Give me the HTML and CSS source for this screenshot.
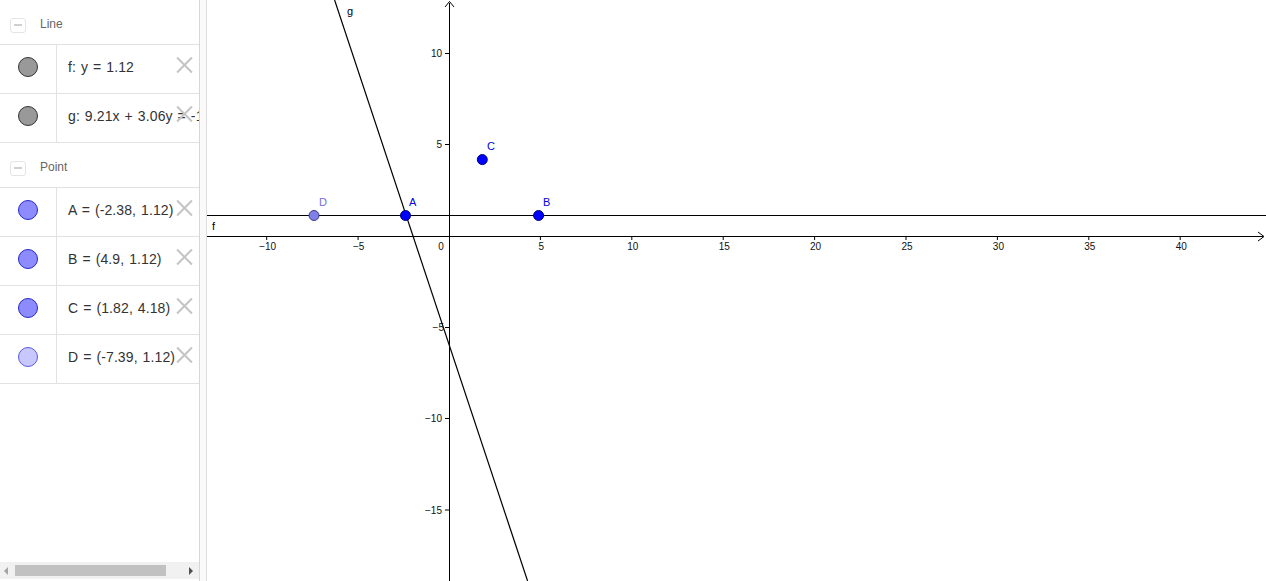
FILE: index.html
```html
<!DOCTYPE html>
<html>
<head>
<meta charset="utf-8">
<link rel="stylesheet" href="styles.css">
</head>
<body>
<div class="app">
  <aside class="panel">
    <div class="list">
      <div class="group">
        <span class="toggle"><span class="minus"></span></span>
        <span class="group-name">Line</span>
      </div>
      <div class="item">
        <div class="marble-col"><span class="marble gray"></span></div>
        <div class="text">f: y = 1.12</div>
        <span class="del"></span>
      </div>
      <div class="item">
        <div class="marble-col"><span class="marble gray"></span></div>
        <div class="text">g: 9.21x + 3.06y = -18.49</div>
        <span class="del"></span>
      </div>
      <div class="group">
        <span class="toggle"><span class="minus"></span></span>
        <span class="group-name">Point</span>
      </div>
      <div class="item">
        <div class="marble-col"><span class="marble blue"></span></div>
        <div class="text">A = (-2.38, 1.12)</div>
        <span class="del"></span>
      </div>
      <div class="item">
        <div class="marble-col"><span class="marble blue"></span></div>
        <div class="text">B = (4.9, 1.12)</div>
        <span class="del"></span>
      </div>
      <div class="item">
        <div class="marble-col"><span class="marble blue"></span></div>
        <div class="text">C = (1.82, 4.18)</div>
        <span class="del"></span>
      </div>
      <div class="item">
        <div class="marble-col"><span class="marble light"></span></div>
        <div class="text">D = (-7.39, 1.12)</div>
        <span class="del"></span>
      </div>
    </div>
    <div class="hscroll">
      <span class="arrow left"></span>
      <span class="thumb"></span>
      <span class="arrow right"></span>
    </div>
  </aside>
  <div class="splitter"></div>
  <main class="canvas">
    <svg class="graph" width="1059" height="581" viewBox="0 0 1059 581">
      <g class="axis">
        <line x1="0" y1="236.5" x2="1056" y2="236.5"/>
        <polyline class="arrowhead" points="1051,232 1057,236.5 1051,241"/>
        <line x1="242.5" y1="3" x2="242.5" y2="581"/>
        <polyline class="arrowhead" points="238,7 242.5,1.5 247,7"/>
        <line x1="59.7" y1="236" x2="59.7" y2="240"/>
        <line x1="151.1" y1="236" x2="151.1" y2="240"/>
        <line x1="333.4" y1="236" x2="333.4" y2="240"/>
        <line x1="424.8" y1="236" x2="424.8" y2="240"/>
        <line x1="516.2" y1="236" x2="516.2" y2="240"/>
        <line x1="607.6" y1="236" x2="607.6" y2="240"/>
        <line x1="699" y1="236" x2="699" y2="240"/>
        <line x1="790.4" y1="236" x2="790.4" y2="240"/>
        <line x1="881.8" y1="236" x2="881.8" y2="240"/>
        <line x1="973.2" y1="236" x2="973.2" y2="240"/>
        <line x1="238" y1="53.5" x2="242" y2="53.5"/>
        <line x1="238" y1="144.5" x2="242" y2="144.5"/>
        <line x1="238" y1="327.5" x2="242" y2="327.5"/>
        <line x1="238" y1="418.5" x2="242" y2="418.5"/>
        <line x1="238" y1="510" x2="242" y2="510"/>
      </g>
      <g class="ticklabels">
        <text x="60.7" y="250" text-anchor="middle">−10</text>
        <text x="151.6" y="250" text-anchor="middle">−5</text>
        <text x="234" y="250" text-anchor="middle">0</text>
        <text x="334.4" y="250" text-anchor="middle">5</text>
        <text x="425.8" y="250" text-anchor="middle">10</text>
        <text x="517.2" y="250" text-anchor="middle">15</text>
        <text x="608.6" y="250" text-anchor="middle">20</text>
        <text x="700" y="250" text-anchor="middle">25</text>
        <text x="791.4" y="250" text-anchor="middle">30</text>
        <text x="882.8" y="250" text-anchor="middle">35</text>
        <text x="974.2" y="250" text-anchor="middle">40</text>
        <text x="235" y="57" text-anchor="end">10</text>
        <text x="235" y="148" text-anchor="end">5</text>
        <text x="237" y="331" text-anchor="end">−5</text>
        <text x="235" y="422" text-anchor="end">−10</text>
        <text x="235" y="514" text-anchor="end">−15</text>
      </g>
      <g class="objline">
        <line x1="0" y1="215.5" x2="1059" y2="215.5"/>
        <line x1="127.6" y1="0" x2="320.6" y2="581"/>
      </g>
      <text class="linelabel" x="5" y="230">f</text>
      <text class="linelabel" x="140" y="15">g</text>
      <circle class="pt" cx="198.5" cy="215.5" r="5"/>
      <circle class="pt" cx="331.6" cy="215.5" r="5"/>
      <circle class="pt" cx="275.3" cy="159.6" r="5"/>
      <circle class="pt free" cx="107" cy="215.5" r="5"/>
      <text class="ptlabel" x="202" y="206">A</text>
      <text class="ptlabel" x="336" y="206">B</text>
      <text class="ptlabel" x="280" y="150">C</text>
      <text class="ptlabel free" x="112" y="206">D</text>
    </svg>
  </main>
</div>
</body>
</html>
```

FILE: styles.css
```css
html, body {
  margin: 0;
  padding: 0;
  background: #fff;
  overflow: hidden;
}
.app {
  display: flex;
  width: 1266px;
  height: 581px;
  font-family: "Liberation Sans", Arial, sans-serif;
}
.panel {
  width: 199px;
  border-right: 1px solid #d6d6d6;
  display: flex;
  flex-direction: column;
  overflow: hidden;
  flex: none;
}
.list {
  flex: 1;
  overflow: hidden;
}
.group {
  height: 40px;
  padding-top: 4px;
  padding-left: 10px;
  display: flex;
  align-items: center;
  border-bottom: 1px solid #e2e2e2;
}
.toggle {
  width: 14px;
  height: 13px;
  border: 1px solid #e4e4e4;
  border-radius: 3px;
  display: flex;
  align-items: center;
  justify-content: center;
  margin-top: 2px;
}
.minus {
  width: 8px;
  height: 2px;
  background: #cfcfcf;
}
.group-name {
  margin-left: 14px;
  font-size: 12px;
  color: #666;
}
.item {
  position: relative;
  height: 48px;
  display: flex;
  border-bottom: 1px solid #e2e2e2;
}
.marble-col {
  width: 57px;
  border-right: 1px solid #e2e2e2;
  display: flex;
  align-items: center;
  justify-content: center;
  flex: none;
  padding-bottom: 4px;
  box-sizing: border-box;
}
.marble {
  width: 18px;
  height: 18px;
  border-radius: 50%;
  border: 1px solid #333;
  box-sizing: content-box;
}
.marble.gray { background: #999; border-color: #333; }
.marble.blue { background: #8c8cff; border-color: #2626c8; }
.marble.light { background: #c8c8ff; border-color: #5a5ae0; }
.text {
  padding-left: 11px;
  padding-bottom: 4px;
  display: flex;
  align-items: center;
  font-size: 14px;
  letter-spacing: 0.1px;
  word-spacing: 1px;
  color: #333;
  white-space: nowrap;
}
.del {
  position: absolute;
  right: 7px;
  top: 12px;
  width: 16px;
  height: 16px;
}
.del::before, .del::after {
  content: "";
  position: absolute;
  left: -2px;
  top: 7px;
  width: 21px;
  height: 2px;
  background: #c4c4c4;
  transform: rotate(45deg);
}
.del::after { transform: rotate(-45deg); }
.hscroll {
  height: 17px;
  margin-bottom: 2px;
  background: #f1f1f1;
  position: relative;
  display: flex;
  align-items: center;
}
.thumb {
  position: absolute;
  left: 15px;
  width: 151px;
  top: 3px;
  height: 11px;
  background: #c1c1c1;
}
.arrow {
  position: absolute;
  top: 5px;
  width: 0;
  height: 0;
  border-top: 4px solid transparent;
  border-bottom: 4px solid transparent;
}
.arrow.left {
  left: 4px;
  border-right: 4px solid #a3a3a3;
}
.arrow.right {
  left: 189px;
  border-left: 4px solid #505050;
}
.splitter {
  width: 6px;
  background: #fafafa;
  border-right: 1px solid #dcdcdc;
  flex: none;
}
.canvas {
  flex: 1;
  position: relative;
  overflow: hidden;
}
.graph {
  display: block;
}
.axis line, .axis polyline {
  stroke: #000;
  stroke-width: 1;
  fill: none;
}
.ticklabels text {
  font-family: "Liberation Sans", Arial, sans-serif;
  font-size: 10px;
  fill: #111;
}
.objline line {
  stroke: #000;
  stroke-width: 1.2;
}
.linelabel {
  font-family: "Liberation Sans", Arial, sans-serif;
  font-size: 11px;
  fill: #000;
}
.pt {
  fill: #0000ff;
  stroke: #00007a;
  stroke-width: 1;
}
.pt.free {
  fill: #8080ea;
  stroke: #3a3a80;
}
.ptlabel {
  font-family: "Liberation Sans", Arial, sans-serif;
  font-size: 11px;
  fill: #0000dd;
}
.ptlabel.free {
  fill: #7070e0;
}
```
